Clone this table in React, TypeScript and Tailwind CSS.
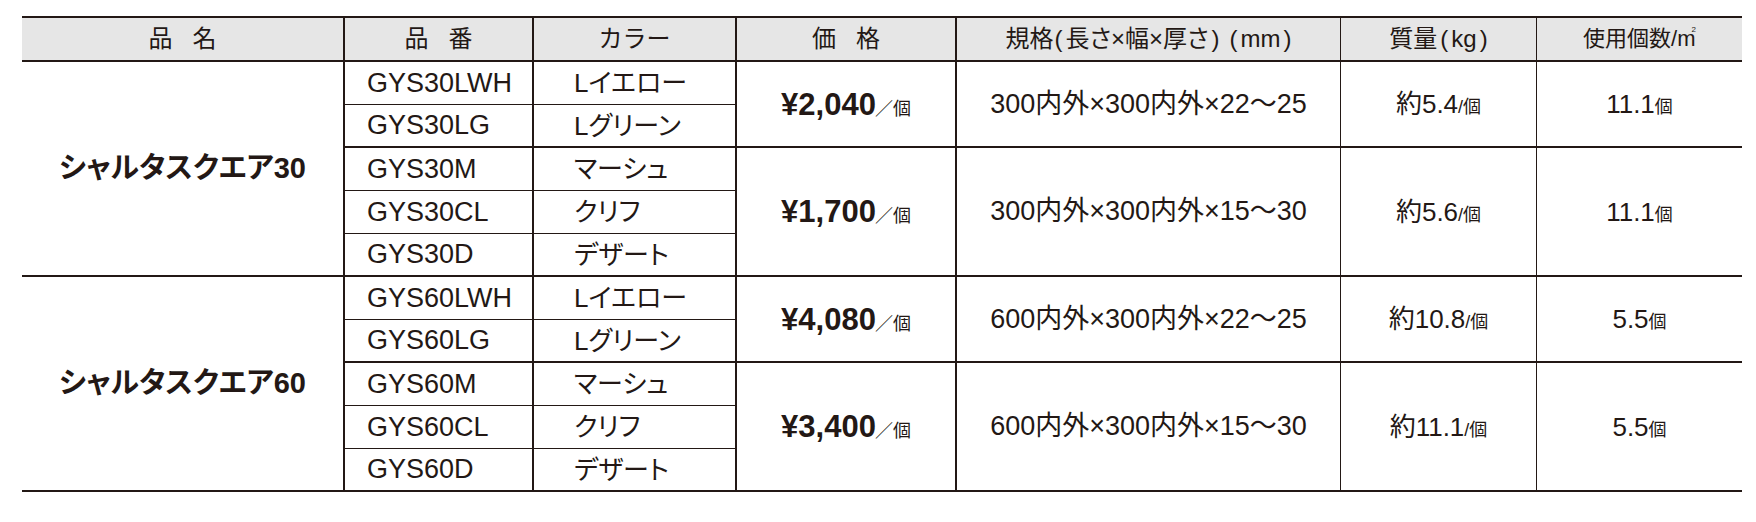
import React from "react";

type Item = { code: string; color: string };
type Sub = {
  items: Item[];
  price: string;
  spec: string;
  weight: string;
  count: string;
};
type Group = { name: string; subs: Sub[] };

const groups: Group[] = [
  {
    name: "シャルタスクエア30",
    subs: [
      {
        items: [
          { code: "GYS30LWH", color: "Lイエロー" },
          { code: "GYS30LG", color: "Lグリーン" },
        ],
        price: "¥2,040",
        spec: "300内外×300内外×22〜25",
        weight: "5.4",
        count: "11.1",
      },
      {
        items: [
          { code: "GYS30M", color: "マーシュ" },
          { code: "GYS30CL", color: "クリフ" },
          { code: "GYS30D", color: "デザート" },
        ],
        price: "¥1,700",
        spec: "300内外×300内外×15〜30",
        weight: "5.6",
        count: "11.1",
      },
    ],
  },
  {
    name: "シャルタスクエア60",
    subs: [
      {
        items: [
          { code: "GYS60LWH", color: "Lイエロー" },
          { code: "GYS60LG", color: "Lグリーン" },
        ],
        price: "¥4,080",
        spec: "600内外×300内外×22〜25",
        weight: "10.8",
        count: "5.5",
      },
      {
        items: [
          { code: "GYS60M", color: "マーシュ" },
          { code: "GYS60CL", color: "クリフ" },
          { code: "GYS60D", color: "デザート" },
        ],
        price: "¥3,400",
        spec: "600内外×300内外×15〜30",
        weight: "11.1",
        count: "5.5",
      },
    ],
  },
];

const B = "border-[#231815]";
const head =
  "bg-[#e6e6e6] border-t-2 border-b-2 flex items-center justify-center text-[24px] leading-none " +
  B;

const spanRow: Record<number, string> = { 2: "row-span-2", 3: "row-span-3" };

export default function App() {
  return (
    <div className="w-[1756px] h-[522px] bg-white pt-[16px] pl-[22px] text-[#231815] font-['Liberation_Sans','Noto_Sans_CJK_JP',sans-serif] [font-feature-settings:'palt']">
      <div className="w-[1720px] grid grid-cols-[323px_189px_203px_220px_384px_196px_205px] grid-rows-[46px_repeat(10,43px)]">
        <div className={head + " border-r-2 [font-feature-settings:normal]"}>
          品<span className="ml-[20px]">名</span>
        </div>
        <div className={head + " border-r-2 [font-feature-settings:normal]"}>
          品<span className="ml-[20px]">番</span>
        </div>
        <div className={head + " border-r-2 [font-feature-settings:normal]"}>カラー</div>
        <div className={head + " border-r-2 [font-feature-settings:normal]"}>
          価<span className="ml-[20px]">格</span>
        </div>
        <div className={head + " border-r"}>
          規格<span className="ml-[1px] mr-[3px]">(</span>長さ×幅×厚さ<span className="ml-[3px]">)</span>
          <span className="ml-[10px] mr-[3px]">(</span>mm<span className="ml-[3px]">)</span>
        </div>
        <div className={head + " border-r"}>
          質量<span className="mx-[3px]">(</span>kg<span className="ml-[3px]">)</span>
        </div>
        <div className={head + " !text-[22px] [font-feature-settings:normal]"}>
          使用個数/<span className="tracking-[-1px]">m</span>
          <span className="self-start mt-[8px] -ml-[3px] text-[8px]">2</span>
        </div>

        {groups.map((g) => (
          <React.Fragment key={g.name}>
            <div
              className={
                "row-span-5 border-r-2 border-b-2 flex items-center justify-center text-[29px] font-bold leading-none " +
                B
              }
            >
              {g.name}
            </div>
            {g.subs.map((s) =>
              s.items.map((it, i) => {
                const last = i === s.items.length - 1;
                const bb = last ? "border-b-2" : "border-b";
                const rs = spanRow[s.items.length];
                return (
                  <React.Fragment key={it.code}>
                    <div
                      className={
                        "border-r-2 " + bb + " flex items-center pl-[22px] text-[27px] leading-none " + B
                      }
                    >
                      {it.code}
                    </div>
                    <div
                      className={
                        "border-r-2 " + bb + " flex items-center pl-[40px] text-[26px] leading-none " + B
                      }
                    >
                      {it.color}
                    </div>
                    {i === 0 && (
                      <>
                        <div
                          className={
                            rs + " border-r-2 border-b-2 flex items-center justify-center " + B
                          }
                        >
                          <div className="flex items-baseline leading-none">
                            <span className="text-[31px] font-bold">{s.price}</span>
                            <span className="text-[18px] -ml-[1px]">／個</span>
                          </div>
                        </div>
                        <div
                          className={
                            rs +
                            " border-r border-b-2 flex items-center justify-center text-[27px] leading-none " +
                            B
                          }
                        >
                          {s.spec}
                        </div>
                        <div
                          className={
                            rs + " border-r border-b-2 flex items-center justify-center " + B
                          }
                        >
                          <div className="flex items-baseline leading-none">
                            <span className="text-[26px]">約{s.weight}</span>
                            <span className="text-[18px]">/個</span>
                          </div>
                        </div>
                        <div
                          className={rs + " border-b-2 flex items-center justify-center " + B}
                        >
                          <div className="flex items-baseline leading-none">
                            <span className="text-[26px]">{s.count}</span>
                            <span className="text-[18px]">個</span>
                          </div>
                        </div>
                      </>
                    )}
                  </React.Fragment>
                );
              })
            )}
          </React.Fragment>
        ))}
      </div>
    </div>
  );
}
